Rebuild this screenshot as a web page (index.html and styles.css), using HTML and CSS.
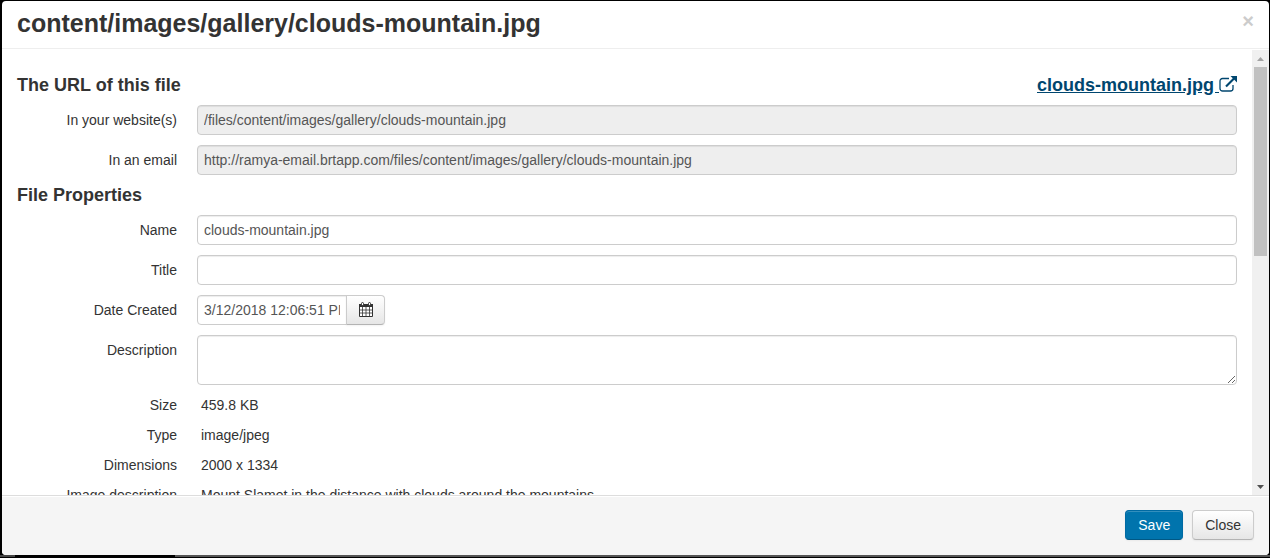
FILE: index.html
```html
<!DOCTYPE html>
<html lang="en">
<head>
<meta charset="UTF-8" />
<meta name="viewport" content="width=device-width, initial-scale=1"/>
<title>File Properties</title>
<link rel="stylesheet" href="styles.css">
</head>
<body>
  <div class="modal" role="dialog" aria-labelledby="modal-title">
    <header class="modal-header">
      <h1 id="modal-title">content/images/gallery/clouds-mountain.jpg</h1>
      <button type="button" class="close" aria-label="Close dialog">×</button>
    </header>

    <div class="modal-main">
      <form class="modal-body" id="file-form">
        <div class="section-heading">
          <h2>The URL of this file</h2>
          <a class="file-link" href="#">clouds-mountain.jpg
            <svg class="icon-external" viewBox="0 0 18 16" aria-hidden="true">
              <path d="M10 2.500H3.500a2.500 2.500 0 0 0-2.500 2.500v7.500a2.500 2.500 0 0 0 2.500 2.500h8a2.500 2.500 0 0 0 2.500-2.500V9" fill="none" stroke="currentColor" stroke-width="1.300"/>
              <path d="M7 10.500L15 2.500" fill="none" stroke="currentColor" stroke-width="2.200"/>
              <path d="M11.500 0H18v6.500z" fill="currentColor"/>
            </svg>
          </a>
        </div>
        <div class="control-row">
          <label for="url-website">In your website(s)</label>
          <input type="text" id="url-website" value="/files/content/images/gallery/clouds-mountain.jpg" readonly>
        </div>
        <div class="control-row">
          <label for="url-email">In an email</label>
          <input type="text" id="url-email" value="http://ramya-email.brtapp.com/files/content/images/gallery/clouds-mountain.jpg" readonly>
        </div>

        <div class="section-heading">
          <h2>File Properties</h2>
        </div>
        <div class="control-row">
          <label for="name">Name</label>
          <input type="text" id="name" value="clouds-mountain.jpg">
        </div>
        <div class="control-row">
          <label for="title">Title</label>
          <input type="text" id="title">
        </div>
        <div class="control-row">
          <label for="date-created">Date Created</label>
          <div class="input-append">
            <input type="text" id="date-created" value="3/12/2018 12:06:51 PM">
            <button type="button" class="btn" aria-label="Pick a date">
              <svg class="icon-calendar" viewBox="0 0 14 15" aria-hidden="true">
                <path d="M.5 3h13v11.500H.5z" fill="#fff" stroke="currentColor"/>
                <path d="M0 2h14v3H0z" fill="currentColor"/>
                <path d="M3.500 5v9M7 5v9M10.500 5v9M1 8h12M1 11h12" fill="none" stroke="currentColor" stroke-width=".8"/>
                <rect x="2.500" y=".5" width="2" height="3" rx="1" fill="#fff" stroke="currentColor"/>
                <rect x="9.500" y=".5" width="2" height="3" rx="1" fill="#fff" stroke="currentColor"/>
              </svg>
            </button>
          </div>
        </div>
        <div class="control-row">
          <label for="description">Description</label>
          <textarea id="description"></textarea>
        </div>

        <dl class="file-info">
          <dt>Size</dt><dd>459.8 KB</dd>
          <dt>Type</dt><dd>image/jpeg</dd>
          <dt>Dimensions</dt><dd>2000 x 1334</dd>
          <dt>Image description</dt><dd>Mount Slamet in the distance with clouds around the mountains</dd>
        </dl>
      </form>
      <div class="scrollbar" aria-hidden="true">
        <svg class="scroll-arrow" viewBox="0 0 17 17"><path d="M5 11h7L8.500 7z" fill="#a3a3a3"/></svg>
        <div class="scroll-track"><div class="scroll-thumb"></div></div>
        <svg class="scroll-arrow" viewBox="0 0 17 17"><path d="M5 7h7l-3.500 4z" fill="#505050"/></svg>
      </div>
    </div>

    <footer class="modal-footer">
      <button type="submit" form="file-form" class="btn btn-primary">Save</button>
      <button type="button" class="btn">Close</button>
    </footer>
  </div>
</body>
</html>
```
FILE: styles.css
```css
* {
  box-sizing: border-box;
}
html, body {
  height: 100%;
}
body {
  margin: 0;
  padding: 1px 1px 3px 2px;
  background: #000 linear-gradient(to right, #444 15px, #000 15px, #000 175px, #555 175px) 0 calc(100% - 1px) / 100% 2px no-repeat;
  font-family: Arial, "Liberation Sans", sans-serif;
  font-size: 14px;
  line-height: 20px;
  color: #333;
}
.modal {
  display: flex;
  flex-direction: column;
  height: 100%;
  background: #fff;
  border-radius: 4px;
  overflow: hidden;
}
.modal-header {
  display: flex;
  justify-content: space-between;
  align-items: flex-start;
  padding: 7px 15px 10px;
  border-bottom: 1px solid #eee;
}
h1, h2 {
  margin: 0;
  font-weight: bold;
}
h1 {
  font-size: 25px;
  line-height: 30px;
}
h2, .file-link {
  font-size: 18px;
  line-height: 40px;
}
.close {
  padding: 0;
  margin-top: 3px;
  border: 0;
  background: none;
  font: bold 20px/20px Arial, "Liberation Sans", sans-serif;
  color: #ccc;
  cursor: pointer;
}
.modal-main {
  display: flex;
  flex: 1;
  min-height: 0;
  padding-top: 1px;
}
.modal-body {
  flex: 1;
  min-width: 0;
  padding: 15px;
  overflow-y: auto;
  scrollbar-width: none;
}
.scrollbar {
  display: flex;
  flex-direction: column;
  width: 17px;
  background: #f0f0f0;
}
.scroll-arrow {
  display: block;
  width: 17px;
  height: 17px;
}
.scroll-track {
  flex: 1;
  padding: 0 2px;
}
.scroll-thumb {
  height: 46%;
  background: #c1c1c1;
}
.section-heading {
  display: flex;
  justify-content: space-between;
}
.file-link {
  font-weight: bold;
  color: #00466f;
}
.icon-external {
  width: 18px;
  height: 16px;
  vertical-align: -1px;
}
.control-row {
  display: flex;
}
.control-row + .control-row {
  margin-top: 10px;
}
.control-row label {
  flex: none;
  width: 160px;
  margin-right: 20px;
  padding-top: 5px;
  text-align: right;
}
input, textarea {
  flex: 1;
  min-width: 0;
  height: 30px;
  padding: 4px 6px;
  border: 1px solid #ccc;
  border-radius: 4px;
  background: #fff;
  box-shadow: inset 0 1px 1px rgba(0, 0, 0, 0.075);
  font: inherit;
  color: #555;
}
input[readonly] {
  background: #eee;
}
textarea {
  height: 50px;
  resize: vertical;
}
.input-append {
  display: flex;
}
.input-append input {
  flex: none;
  width: 150px;
  border-radius: 4px 0 0 4px;
}
.input-append .btn {
  width: 39px;
  margin-left: -1px;
  padding: 3px 11px 5px;
  border-radius: 0 4px 4px 0;
}
.icon-calendar {
  display: block;
  width: 14px;
  height: 15px;
  margin: 0 auto;
}
.file-info {
  display: grid;
  grid-template-columns: 160px 1fr;
  gap: 10px 24px;
  margin: 10px 0 0;
}
.file-info dt {
  text-align: right;
}
.file-info dd {
  margin: 0;
}
.modal-footer {
  display: flex;
  justify-content: flex-end;
  gap: 9px;
  padding: 14px 15px 15px;
  border-top: 1px solid #ddd;
  background: #f5f5f5;
  box-shadow: inset 0 1px 0 #fff;
}
.btn {
  height: 30px;
  padding: 4px 12px;
  border: 1px solid #ccc;
  border-bottom-color: #b3b3b3;
  border-radius: 4px;
  background: linear-gradient(#fff, #e6e6e6);
  box-shadow: inset 0 1px 0 rgba(255, 255, 255, 0.2), 0 1px 2px rgba(0, 0, 0, 0.05);
  font: inherit;
  color: #333;
  cursor: pointer;
}
.btn-primary {
  border-color: #006aa3 #006aa3 #005885;
  background: #0074ad;
  color: #fff;
}
```
